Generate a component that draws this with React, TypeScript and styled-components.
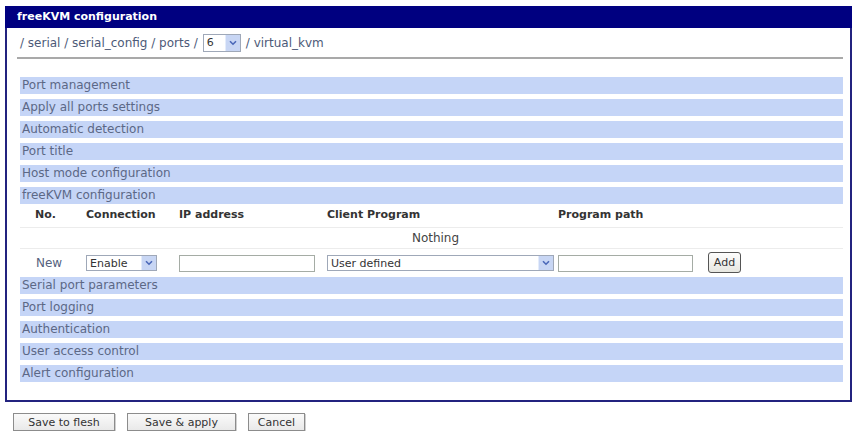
import styled, { createGlobalStyle } from "styled-components";

const GlobalStyle = createGlobalStyle`
  body {
    margin: 0;
    background: #ffffff;
    font-family: "DejaVu Sans", Verdana, sans-serif;
  }
`;

const Page = styled.div`
  padding: 6px 0 0 5px;
`;

const Panel = styled.div`
  width: 843px;
  border: 2px solid #23237f;
  border-top: none;
`;

const TitleBar = styled.div`
  height: 22px;
  line-height: 22px;
  margin: 0 -2px;
  padding-left: 12px;
  background: #000080;
  color: #ffffff;
  font-size: 11px;
  font-weight: bold;
`;

const Body = styled.div`
  padding: 0 7px 18px 13px;
`;

const Breadcrumb = styled.div`
  height: 29px;
  display: flex;
  align-items: center;
  gap: 5px;
  margin-left: -3px;
  padding-left: 3px;
  border-bottom: 2px solid #a9a9a9;
  font-size: 12px;
  color: #4d5a78;
`;

const Crumb = styled.span`
  color: #4d5a78;
`;

const SelectBox = styled.div<{ $w: number; $h?: number }>`
  width: ${(p) => p.$w}px;
  height: ${(p) => p.$h ?? 16}px;
  box-sizing: border-box;
  display: inline-flex;
  align-items: stretch;
  border: 1px solid #9fa8b8;
  background: #ffffff;
  font-size: 11px;
  color: #333;
`;

const SelectText = styled.span`
  flex: 1;
  display: flex;
  align-items: center;
  padding-left: 3px;
  white-space: nowrap;
  overflow: hidden;
`;

const ArrowBox = styled.span`
  width: 14px;
  display: flex;
  align-items: center;
  justify-content: center;
  background: #c8d6f4;
  border-left: 1px solid #e4ecfb;
`;

const SectionList = styled.div`
  margin-top: 18px;
`;

const SectionRow = styled.div<{ $first?: boolean }>`
  height: 17px;
  line-height: 17px;
  margin-top: ${(p) => (p.$first ? 0 : 5)}px;
  padding-left: 2px;
  background: #c5d5f7;
  color: #5c6886;
  font-size: 12px;
`;

const Table = styled.div`
  display: grid;
  grid-template-columns: 66px 93px 148px 231px 150px 1fr;
`;

const HeadCell = styled.div<{ $pad?: number }>`
  height: 24px;
  box-sizing: border-box;
  padding: 4px 0 0 ${(p) => p.$pad ?? 0}px;
  border-bottom: 1px solid #ececec;
  font-size: 11px;
  font-weight: bold;
  color: #333;
`;

const NothingCell = styled.div`
  grid-column: 1 / -1;
  height: 21px;
  box-sizing: border-box;
  border-bottom: 1px solid #ececec;
  text-align: center;
  line-height: 20px;
  font-size: 12px;
  color: #444;
  padding-left: 8px;
`;

const Cell = styled.div<{ $pad?: number }>`
  height: 28px;
  display: flex;
  align-items: center;
  padding-left: ${(p) => p.$pad ?? 0}px;
  font-size: 12px;
  color: #56627e;
`;

const TextInput = styled.input<{ $w: number }>`
  width: ${(p) => p.$w}px;
  height: 17px;
  box-sizing: border-box;
  border: 1px solid #a5aca5;
  padding: 0 3px;
  font-size: 11px;
  outline: none;
`;

const SmallButton = styled.button`
  height: 21px;
  width: 33px;
  margin-top: -2px;
  padding: 0;
  border: 1px solid #555;
  border-radius: 3px;
  background: linear-gradient(#fdfdfd, #e6e6e0);
  font-family: inherit;
  font-size: 11px;
  color: #333;
`;

const ButtonBar = styled.div`
  display: flex;
  gap: 12px;
  margin: 11px 0 0 8px;
`;

const Button = styled.button<{ $w: number }>`
  width: ${(p) => p.$w}px;
  height: 18px;
  padding: 0;
  border: 1px solid #8c8c8c;
  background: linear-gradient(#fafafa, #e9e9e9);
  box-shadow: 1px 1px 0 #d0d0d0;
  font-family: inherit;
  font-size: 11px;
  color: #333;
`;

const Chevron = () => (
  <svg width="8" height="6" viewBox="0 0 8 6">
    <path d="M1 1.2 L4 4.2 L7 1.2" fill="none" stroke="#4a67b8" strokeWidth="1.6" />
  </svg>
);

const topSections = [
  "Port management",
  "Apply all ports settings",
  "Automatic detection",
  "Port title",
  "Host mode configuration",
  "freeKVM configuration",
];

const bottomSections = [
  "Serial port parameters",
  "Port logging",
  "Authentication",
  "User access control",
  "Alert configuration",
];

export default function App() {
  return (
    <Page>
      <GlobalStyle />
      <Panel>
        <TitleBar>freeKVM configuration</TitleBar>
        <Body>
          <Breadcrumb>
            <Crumb>/ serial / serial_config / ports /</Crumb>
            <SelectBox $w={38} $h={18}>
              <SelectText>6</SelectText>
              <ArrowBox>
                <Chevron />
              </ArrowBox>
            </SelectBox>
            <Crumb>/ virtual_kvm</Crumb>
          </Breadcrumb>

          <SectionList>
            {topSections.map((s, i) => (
              <SectionRow key={s} $first={i === 0}>
                {s}
              </SectionRow>
            ))}

            <Table>
              <HeadCell $pad={15}>No.</HeadCell>
              <HeadCell>Connection</HeadCell>
              <HeadCell>IP address</HeadCell>
              <HeadCell>Client Program</HeadCell>
              <HeadCell>Program path</HeadCell>
              <HeadCell />

              <NothingCell>Nothing</NothingCell>

              <Cell $pad={16}>New</Cell>
              <Cell>
                <SelectBox $w={71}>
                  <SelectText>Enable</SelectText>
                  <ArrowBox>
                    <Chevron />
                  </ArrowBox>
                </SelectBox>
              </Cell>
              <Cell>
                <TextInput $w={136} />
              </Cell>
              <Cell>
                <SelectBox $w={227}>
                  <SelectText>User defined</SelectText>
                  <ArrowBox>
                    <Chevron />
                  </ArrowBox>
                </SelectBox>
              </Cell>
              <Cell>
                <TextInput $w={135} />
              </Cell>
              <Cell>
                <SmallButton>Add</SmallButton>
              </Cell>
            </Table>

            {bottomSections.map((s, i) => (
              <SectionRow key={s} $first={i === 0}>
                {s}
              </SectionRow>
            ))}
          </SectionList>
        </Body>
      </Panel>

      <ButtonBar>
        <Button $w={102}>Save to flesh</Button>
        <Button $w={109}>Save &amp; apply</Button>
        <Button $w={57}>Cancel</Button>
      </ButtonBar>
    </Page>
  );
}
